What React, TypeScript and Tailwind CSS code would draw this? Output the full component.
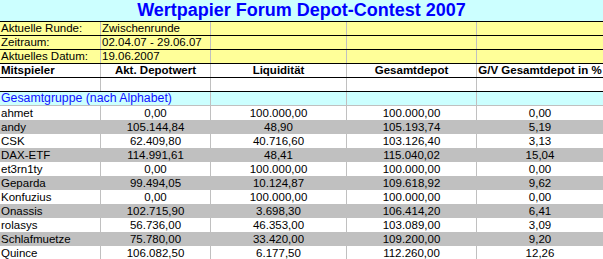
import React from 'react';

type Row = { name: string; depot: string; liq: string; total: string; gv: string };

const rows: Row[] = [
  { name: 'ahmet', depot: '0,00', liq: '100.000,00', total: '100.000,00', gv: '0,00' },
  { name: 'andy', depot: '105.144,84', liq: '48,90', total: '105.193,74', gv: '5,19' },
  { name: 'CSK', depot: '62.409,80', liq: '40.716,60', total: '103.126,40', gv: '3,13' },
  { name: 'DAX-ETF', depot: '114.991,61', liq: '48,41', total: '115.040,02', gv: '15,04' },
  { name: 'et3rn1ty', depot: '0,00', liq: '100.000,00', total: '100.000,00', gv: '0,00' },
  { name: 'Geparda', depot: '99.494,05', liq: '10.124,87', total: '109.618,92', gv: '9,62' },
  { name: 'Konfuzius', depot: '0,00', liq: '100.000,00', total: '100.000,00', gv: '0,00' },
  { name: 'Onassis', depot: '102.715,90', liq: '3.698,30', total: '106.414,20', gv: '6,41' },
  { name: 'rolasys', depot: '56.736,00', liq: '46.353,00', total: '103.089,00', gv: '3,09' },
  { name: 'Schlafmuetze', depot: '75.780,00', liq: '33.420,00', total: '109.200,00', gv: '9,20' },
  { name: 'Quince', depot: '106.082,50', liq: '6.177,50', total: '112.260,00', gv: '12,26' },
];

const grid = 'grid grid-cols-[100px_110px_136px_130px_127px]';
const cell = 'h-[13px] leading-[13px] whitespace-nowrap overflow-hidden';
const line = 'border-l border-[#c0c0c0]';

const InfoRow: React.FC<{ label: string; value: string }> = ({ label, value }) => (
  <div className={`${grid} bg-[#ffff99] border-b border-black`}>
    <div className={`${cell} pl-px`}>{label}</div>
    <div className={`${cell} ${line} pl-px`}>{value}</div>
    <div className={`${cell} ${line}`} />
    <div className={`${cell} ${line}`} />
    <div className={`${cell} ${line}`} />
  </div>
);

const App: React.FC = () => {
  return (
    <div className="w-[603px] h-[259px] overflow-hidden bg-white text-[11.5px] text-black font-['Liberation_Sans',Arial,sans-serif]">
      <div className="h-[22px] bg-[#ccffff] border-b border-black text-center text-[18px] leading-[21px] font-bold text-[#0000ff]">
        Wertpapier Forum Depot-Contest 2007
      </div>
      <InfoRow label="Aktuelle Runde:" value="Zwischenrunde" />
      <InfoRow label="Zeitraum:" value="02.04.07 - 29.06.07" />
      <InfoRow label="Aktuelles Datum:" value="19.06.2007" />
      <div className={`${grid} border-b border-black font-bold`}>
        <div className={`${cell} pl-px`}>Mitspieler</div>
        <div className={`${cell} ${line} text-center`}>Akt. Depotwert</div>
        <div className={`${cell} ${line} text-center`}>Liquidität</div>
        <div className={`${cell} ${line} text-center`}>Gesamtdepot</div>
        <div className={`${cell} ${line} text-center`}>G/V Gesamtdepot in %</div>
      </div>
      <div className={`${grid} border-b border-black`}>
        <div className={cell} />
        <div className={`${cell} ${line}`} />
        <div className={`${cell} ${line}`} />
        <div className={`${cell} ${line}`} />
        <div className={`${cell} ${line}`} />
      </div>
      <div className={`${grid} bg-[#ccffff] border-b border-[#c0c0c0]`}>
        <div className={`${cell} col-span-2 pl-px text-[12.3px] text-[#1010ff]`}>Gesamtgruppe (nach Alphabet)</div>
        <div className={`${cell} ${line}`} />
        <div className={`${cell} ${line}`} />
        <div className={`${cell} ${line}`} />
      </div>
      {rows.map((r, i) => (
        <div key={r.name} className={`${grid} ${i % 2 === 1 ? 'bg-[#c0c0c0]' : 'bg-white'}`}>
          <div className="h-[14px] leading-[14px] pl-px whitespace-nowrap">{r.name}</div>
          <div className={`h-[14px] leading-[14px] ${line} text-center`}>{r.depot}</div>
          <div className={`h-[14px] leading-[14px] ${line} text-center`}>{r.liq}</div>
          <div className={`h-[14px] leading-[14px] ${line} text-center`}>{r.total}</div>
          <div className={`h-[14px] leading-[14px] ${line} text-center`}>{r.gv}</div>
        </div>
      ))}
    </div>
  );
};

export default App;
